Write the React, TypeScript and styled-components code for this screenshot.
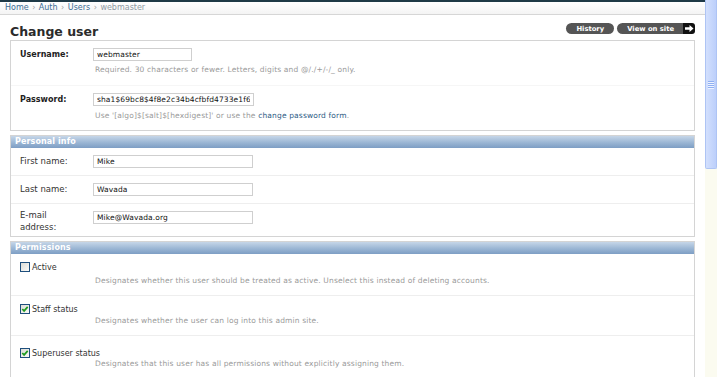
import styled, { createGlobalStyle } from "styled-components";

const GlobalStyle = createGlobalStyle`
  html, body { margin: 0; padding: 0; background: #fff; }
  body {
    font-family: "DejaVu Sans", Verdana, sans-serif;
    color: #333;
    overflow: hidden;
  }
`;

const Screen = styled.div`
  display: flex;
  width: 717px;
  height: 377px;
`;

const Page = styled.div`
  flex: 1;
  min-width: 0;
  overflow: hidden;
`;

const Scrollbar = styled.div`
  width: 12px;
  flex-shrink: 0;
  background: #fbfbf0;
  display: flex;
  flex-direction: column;
`;

const Thumb = styled.div`
  height: 169px;
  box-sizing: border-box;
  border: 1px solid #aec4f4;
  border-top: none;
  border-radius: 0 0 2px 2px;
  background: linear-gradient(to right, #d3e0fd, #bccffb);
  display: flex;
  flex-direction: column;
  align-items: center;
  justify-content: center;
  gap: 1px;
`;

const Grip = styled.span`
  width: 6px;
  height: 1px;
  background: #8fb0f3;
  box-shadow: 0 1px 0 #eef3ff;
`;

const HeaderBar = styled.div`
  height: 2px;
  background: #1f3a47;
`;

const Breadcrumbs = styled.div`
  height: 12px;
  line-height: 12px;
  padding: 0 5px;
  font-size: 8px;
  color: #8e9aa3;
  border-bottom: 1px solid #d6d6d6;
  background: linear-gradient(#fff, #f4f4f4);
  white-space: nowrap;
`;

const Crumb = styled.a`
  color: #3d6e95;
  text-decoration: none;
`;

const Sep = styled.span`
  color: #a3a3a3;
  margin: 0 3.5px;
`;

const Content = styled.div`
  padding: 0 10px;
`;

const TitleBar = styled.div`
  height: 25px;
  box-sizing: border-box;
  padding-top: 8px;
  display: flex;
  align-items: flex-start;
  justify-content: space-between;
`;

const Title = styled.h1`
  margin: 0;
  font-size: 12.5px;
  line-height: 17px;
  font-weight: bold;
  color: #2b2b2b;
`;

const Tools = styled.div`
  display: flex;
  gap: 3px;
`;

const ToolButton = styled.a<{ $arrow?: boolean }>`
  display: flex;
  align-items: center;
  height: 11px;
  padding: 0 ${(p) => (p.$arrow ? "9px" : "10px")} 0 10px;
  border-radius: ${(p) => (p.$arrow ? "6px 0 0 6px" : "6px")};
  background: #555;
  color: #fff;
  font-size: 6.8px;
  font-weight: bold;
  text-decoration: none;
  white-space: nowrap;
`;

const ArrowBox = styled.span`
  display: flex;
  align-items: center;
  justify-content: center;
  width: 12px;
  height: 11px;
  margin-left: -3px;
  background: #111;
  border-radius: 0 3px 3px 0;
`;

const Module = styled.section`
  border: 1px solid #d4d4d4;
  margin-bottom: 4px;
`;

const ModuleHead = styled.h2`
  margin: 0;
  height: 12px;
  line-height: 12px;
  padding: 0 4px;
  font-size: 8px;
  font-weight: bold;
  letter-spacing: 0.1px;
  color: #fff;
  background: linear-gradient(#c6d6e8, #9bb6d4 55%, #7d9ec4);
`;

const Row = styled.div<{ $pt?: number; $pb?: number; $plain?: boolean }>`
  padding: ${(p) => p.$pt ?? 7}px 9px ${(p) => p.$pb ?? 7}px;
  border-bottom: 1px solid ${(p) => (p.$plain ? "#f6f6f6" : "#eeeeee")};
  &:last-child {
    border-bottom: none;
  }
`;

const Line = styled.div`
  display: flex;
  align-items: flex-start;
`;

const Label = styled.label<{ $bold?: boolean; $shift?: number }>`
  width: 73px;
  flex-shrink: 0;
  margin-top: ${(p) => p.$shift ?? 1}px;
  font-size: ${(p) => (p.$bold ? "8px" : "8.5px")};
  line-height: 11.5px;
  font-weight: ${(p) => (p.$bold ? "bold" : "normal")};
  color: ${(p) => (p.$bold ? "#222" : "#333")};
`;

const Input = styled.input<{ $w: number }>`
  width: ${(p) => p.$w}px;
  height: 13px;
  box-sizing: border-box;
  margin: 0;
  padding: 0 3px;
  border: 1px solid #cfcfcf;
  background: #fff;
  font-family: "DejaVu Sans", Verdana, sans-serif;
  font-size: 7.5px;
  letter-spacing: 0.1px;
  color: #111;
  outline: none;
`;

const Help = styled.p<{ $mt?: number }>`
  margin: ${(p) => p.$mt ?? 4}px 0 0 75px;
  font-size: 7.5px;
  letter-spacing: 0.15px;
  line-height: 9px;
  color: #9a9a9a;
  white-space: nowrap;
`;

const HelpLink = styled.a`
  color: #2d5b85;
  text-decoration: none;
`;

const CheckLine = styled.label`
  display: flex;
  align-items: center;
  gap: 2px;
  height: 10px;
  font-size: 8px;
  color: #333;
`;

const CheckBox = styled.span`
  display: flex;
  align-items: center;
  justify-content: center;
  width: 10px;
  height: 10px;
  box-sizing: border-box;
  border: 1px solid #1f4f7d;
  background: linear-gradient(135deg, #dcdcd6, #fbfbf9);
`;

const Check = ({ checked }: { checked?: boolean }) => (
  <CheckBox>
    {checked && (
      <svg width="8" height="8" viewBox="0 0 8 8">
        <path d="M1.3 4 L3.1 5.9 L6.7 1.9" stroke="#1f9b1f" strokeWidth="1.7" fill="none" />
      </svg>
    )}
  </CheckBox>
);

const permissions = [
  {
    name: "Active",
    checked: false,
    help: "Designates whether this user should be treated as active. Unselect this instead of deleting accounts.",
    pt: 8,
    mt: 4,
  },
  {
    name: "Staff status",
    checked: true,
    help: "Designates whether the user can log into this admin site.",
    pt: 8,
    mt: 2,
  },
  {
    name: "Superuser status",
    checked: true,
    help: "Designates that this user has all permissions without explicitly assigning them.",
    pt: 12,
    mt: 1,
  },
];

export default function App() {
  return (
    <Screen>
      <GlobalStyle />
      <Page>
        <HeaderBar />
        <Breadcrumbs>
          <Crumb href="#">Home</Crumb>
          <Sep>›</Sep>
          <Crumb href="#">Auth</Crumb>
          <Sep>›</Sep>
          <Crumb href="#">Users</Crumb>
          <Sep>›</Sep>
          webmaster
        </Breadcrumbs>
        <Content>
          <TitleBar>
            <Title>Change user</Title>
            <Tools>
              <ToolButton href="#">History</ToolButton>
              <ToolButton href="#" $arrow>
                View on site
              </ToolButton>
              <ArrowBox>
                <svg width="9" height="7" viewBox="0 0 9 7">
                  <path d="M0 2.2 H4.5 V0 L8.5 3.5 L4.5 7 V4.8 H0 Z" fill="#fff" />
                </svg>
              </ArrowBox>
            </Tools>
          </TitleBar>

          <Module>
            <Row $pb={11} $plain>
              <Line>
                <Label $bold>Username:</Label>
                <Input $w={99} defaultValue="webmaster" />
              </Line>
              <Help>Required. 30 characters or fewer. Letters, digits and @/./+/-/_ only.</Help>
            </Row>
            <Row $pb={10}>
              <Line>
                <Label $bold>Password:</Label>
                <Input $w={161} defaultValue="sha1$69bc8$4f8e2c34b4cfbfd4733e1f6a3c0b2e7d91" />
              </Line>
              <Help $mt={5}>
                Use '[algo]$[salt]$[hexdigest]' or use the <HelpLink href="#">change password form</HelpLink>.
              </Help>
            </Row>
          </Module>

          <Module>
            <ModuleHead>Personal info</ModuleHead>
            <Row>
              <Line>
                <Label>First name:</Label>
                <Input $w={160} defaultValue="Mike" />
              </Line>
            </Row>
            <Row>
              <Line>
                <Label>Last name:</Label>
                <Input $w={160} defaultValue="Wavada" />
              </Line>
            </Row>
            <Row $pb={3}>
              <Line>
                <Label $shift={-1}>
                  E-mail
                  <br />
                  address:
                </Label>
                <Input $w={160} defaultValue="Mike@Wavada.org" />
              </Line>
            </Row>
          </Module>

          <Module>
            <ModuleHead>Permissions</ModuleHead>
            {permissions.map((perm) => (
              <Row key={perm.name} $pt={perm.pt} $pb={10}>
                <CheckLine>
                  <Check checked={perm.checked} />
                  {perm.name}
                </CheckLine>
                <Help $mt={perm.mt}>{perm.help}</Help>
              </Row>
            ))}
          </Module>
        </Content>
      </Page>
      <Scrollbar>
        <Thumb>
          <Grip />
          <Grip />
          <Grip />
          <Grip />
        </Thumb>
      </Scrollbar>
    </Screen>
  );
}
